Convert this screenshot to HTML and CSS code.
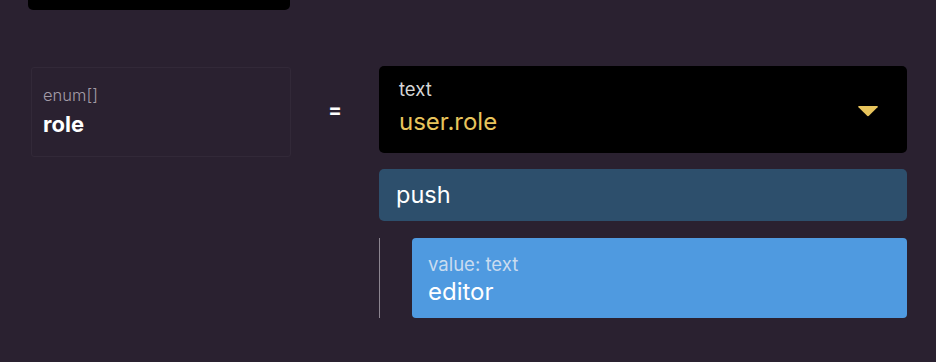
FILE: index.html
```html
<!DOCTYPE html>
<html lang="en">
<head>
    <meta charset="UTF-8">
    <title>Assignment block</title>
    <link rel="stylesheet" href="styles.css">
</head>
<body>
<div class="top-bar"></div>
<div class="assign">
    <div class="target">
        <div class="target-type">enum[]</div>
        <div class="target-name">role</div>
    </div>
    <div class="equals">=</div>
    <div class="expr">
        <div class="select">
            <div class="select-text">
                <div class="select-type">text</div>
                <div class="select-value">user.role</div>
            </div>
            <svg class="caret" width="22" height="12" viewBox="0 0 22 12">
                <path d="M2 1 L20 1 Q21.5 1 20.5 2.2 L12.2 10.6 Q11 11.8 9.8 10.6 L1.5 2.2 Q0.5 1 2 1 Z" fill="#e8c45c"/>
            </svg>
        </div>
        <div class="op">push</div>
        <div class="args">
            <div class="arg">
                <div class="arg-label">value: text</div>
                <div class="arg-value">editor</div>
            </div>
        </div>
    </div>
</div>
</body>
</html>
```

FILE: styles.css
```css
*{
    margin: 0;
    padding: 0;
    box-sizing: border-box;
}
body{
    width: 936px;
    height: 362px;
    background-color: #2a2130;
    font-family: Inter, "Noto Sans", sans-serif;
    color: #fff;
    overflow: hidden;
}
.top-bar{
    width: 262px;
    height: 10px;
    margin-left: 28px;
    background-color: #000;
    border-radius: 0 0 5px 5px;
}
.assign{
    display: flex;
    margin-top: 56px;
    padding-left: 31px;
}
.target{
    width: 260px;
    height: 90px;
    margin-top: 1px;
    border: 1px solid #322938;
    border-radius: 3px;
    padding: 17px 0 0 11px;
}
.target-type{
    font-size: 16.5px;
    font-weight: 300;
    color: #a39ca7;
    line-height: 20px;
}
.target-name{
    font-size: 22px;
    font-weight: 700;
    line-height: 26px;
    margin-top: 6px;
}
.equals{
    width: 88px;
    text-align: center;
    font-size: 20px;
    font-weight: 700;
    padding-top: 32px;
}
.expr{
    width: 528px;
    display: flex;
    flex-direction: column;
    gap: 16px;
}
.select{
    height: 87px;
    background-color: #000;
    border-radius: 5px;
    display: flex;
    align-items: center;
    justify-content: space-between;
    padding: 0 28px 0 20px;
}
.select-text{
    margin-top: -4px;
}
.select-type{
    font-size: 18.5px;
    color: #d6d6d6;
    line-height: 22px;
}
.select-value{
    font-size: 24px;
    color: #e8c45c;
    line-height: 30px;
    margin-top: 7px;
}
.caret{
    margin-top: 2px;
}
.op{
    height: 52px;
    background-color: #2d4f6c;
    border-radius: 5px;
    padding-left: 17px;
    font-size: 23.5px;
    line-height: 52px;
}
.args{
    display: flex;
    padding-left: 32px;
    margin-top: 1px;
    border-left: 1px solid #8c8590;
}
.arg{
    flex: 1;
    height: 80px;
    background-color: #4f9ae0;
    border-radius: 4px;
    padding: 15px 0 0 16px;
}
.arg-label{
    font-size: 18.5px;
    color: #c9dcf0;
    line-height: 22px;
}
.arg-value{
    font-size: 24px;
    line-height: 30px;
    margin-top: 2px;
}
```
